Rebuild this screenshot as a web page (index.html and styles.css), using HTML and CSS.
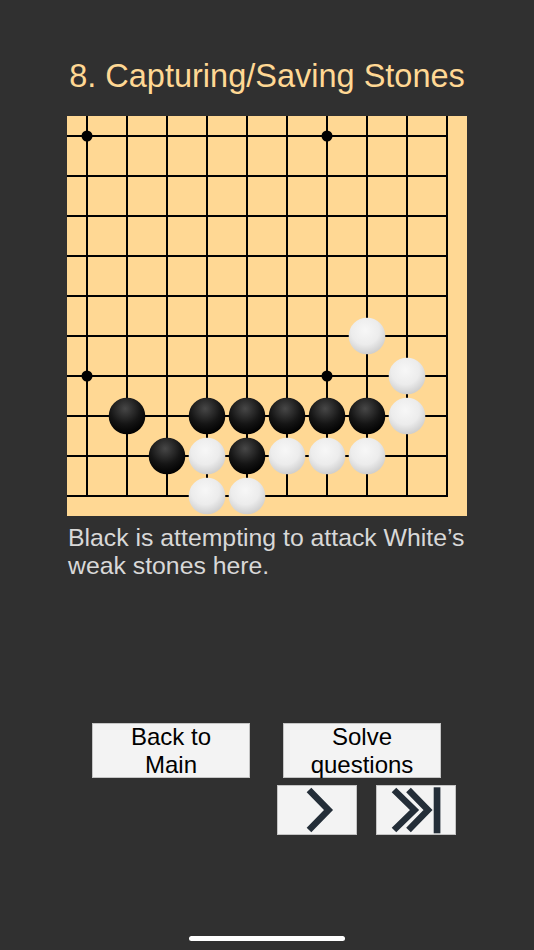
FILE: index.html
```html
<!DOCTYPE html>
<html lang="en">
<head>
<meta charset="utf-8">
<title>Capturing/Saving Stones</title>
<link rel="stylesheet" href="styles.css">
</head>
<body>
<main class="screen">
  <h1 class="title">8. Capturing/Saving Stones</h1>
  <div class="board">
    <svg width="400" height="400" viewBox="0 0 400 400" xmlns="http://www.w3.org/2000/svg">
      <defs>
        <radialGradient id="gw" cx="0.45" cy="0.35" r="0.7">
          <stop offset="0" stop-color="#f7f7f7"/>
          <stop offset="0.55" stop-color="#ececec"/>
          <stop offset="1" stop-color="#c9c9c9"/>
        </radialGradient>
        <radialGradient id="gb" cx="0.45" cy="0.3" r="0.7">
          <stop offset="0" stop-color="#474747"/>
          <stop offset="0.6" stop-color="#151515"/>
          <stop offset="1" stop-color="#000"/>
        </radialGradient>
      </defs>
      <rect width="400" height="400" fill="#FFD894"/>
      <g stroke="#000" stroke-width="2">
        <line x1="20" y1="0" x2="20" y2="381"/>
        <line x1="60" y1="0" x2="60" y2="381"/>
        <line x1="100" y1="0" x2="100" y2="381"/>
        <line x1="140" y1="0" x2="140" y2="381"/>
        <line x1="180" y1="0" x2="180" y2="381"/>
        <line x1="220" y1="0" x2="220" y2="381"/>
        <line x1="260" y1="0" x2="260" y2="381"/>
        <line x1="300" y1="0" x2="300" y2="381"/>
        <line x1="340" y1="0" x2="340" y2="381"/>
        <line x1="380" y1="0" x2="380" y2="381"/>
        <line x1="0" y1="20" x2="381" y2="20"/>
        <line x1="0" y1="60" x2="381" y2="60"/>
        <line x1="0" y1="100" x2="381" y2="100"/>
        <line x1="0" y1="140" x2="381" y2="140"/>
        <line x1="0" y1="180" x2="381" y2="180"/>
        <line x1="0" y1="220" x2="381" y2="220"/>
        <line x1="0" y1="260" x2="381" y2="260"/>
        <line x1="0" y1="300" x2="381" y2="300"/>
        <line x1="0" y1="340" x2="381" y2="340"/>
        <line x1="0" y1="380" x2="381" y2="380"/>
      </g>
      <g fill="#000">
        <circle cx="20" cy="20" r="5.5"/>
        <circle cx="260" cy="20" r="5.5"/>
        <circle cx="20" cy="260" r="5.5"/>
        <circle cx="260" cy="260" r="5.5"/>
      </g>
      <g fill="url(#gb)">
        <circle cx="60" cy="300" r="18.3"/>
        <circle cx="140" cy="300" r="18.3"/>
        <circle cx="180" cy="300" r="18.3"/>
        <circle cx="220" cy="300" r="18.3"/>
        <circle cx="260" cy="300" r="18.3"/>
        <circle cx="300" cy="300" r="18.3"/>
        <circle cx="100" cy="340" r="18.3"/>
        <circle cx="180" cy="340" r="18.3"/>
      </g>
      <g fill="url(#gw)">
        <circle cx="300" cy="220" r="18.3"/>
        <circle cx="340" cy="260" r="18.3"/>
        <circle cx="340" cy="300" r="18.3"/>
        <circle cx="140" cy="340" r="18.3"/>
        <circle cx="220" cy="340" r="18.3"/>
        <circle cx="260" cy="340" r="18.3"/>
        <circle cx="300" cy="340" r="18.3"/>
        <circle cx="140" cy="380" r="18.3"/>
        <circle cx="180" cy="380" r="18.3"/>
      </g>
    </svg>
  </div>
  <p class="desc">Black is attempting to attack White’s weak stones here.</p>
  <div class="controls">
    <div class="row row-main">
      <div class="btn btn-text">Back to<br>Main</div>
      <div class="btn btn-text">Solve<br>questions</div>
    </div>
    <div class="row row-nav">
      <div class="btn btn-icon">
        <svg width="80" height="50" viewBox="0 0 80 50" xmlns="http://www.w3.org/2000/svg">
          <polyline points="32,5 51.5,25 32,45" fill="none" stroke="#242e38" stroke-width="6.5" stroke-linejoin="miter"/>
        </svg>
      </div>
      <div class="btn btn-icon">
        <svg width="80" height="50" viewBox="0 0 80 50" xmlns="http://www.w3.org/2000/svg">
          <polyline points="18,5 38.5,25 18,45" fill="none" stroke="#242e38" stroke-width="6.5" stroke-linejoin="miter"/>
          <polyline points="32.5,5 52,25 32.5,45" fill="none" stroke="#242e38" stroke-width="6.5" stroke-linejoin="miter"/>
          <rect x="57.7" y="2.3" width="6.7" height="46" fill="#242e38"/>
        </svg>
      </div>
    </div>
  </div>
  <div class="home-indicator"></div>
</main>
</body>
</html>
```
FILE: styles.css
```css
* {
  box-sizing: border-box;
}

body {
  margin: 0;
  background: #303030;
}

.screen {
  position: relative;
  width: 534px;
  height: 950px;
  overflow: hidden;
  font-family: "Liberation Sans", Arial, sans-serif;
}

.title {
  margin: 0;
  padding-top: 58px;
  font-size: 32.5px;
  line-height: 36px;
  font-weight: normal;
  color: #FFD894;
  text-align: center;
}

.board {
  width: 400px;
  height: 400px;
  margin: 22px auto 0;
}

.board svg {
  display: block;
}

.desc {
  width: 400px;
  margin: 8px auto 0;
  padding-left: 1px;
  font-size: 24.8px;
  line-height: 28px;
  color: #d8d8d8;
}

.controls {
  margin-top: 143px;
}

.row {
  display: flex;
}

.row-main {
  gap: 33px;
  padding-left: 92px;
}

.row-nav {
  gap: 19px;
  padding-left: 277px;
  margin-top: 7px;
}

.btn {
  background: #f3f3f3;
  box-shadow: inset 0 0 0 1px #c4c4c4;
  color: #000;
}

.btn-text {
  width: 158px;
  height: 55px;
  font-size: 24px;
  line-height: 28px;
  text-align: center;
}

.btn-icon {
  width: 80px;
  height: 50px;
}

.btn-icon svg {
  display: block;
}

.home-indicator {
  position: absolute;
  left: 189px;
  top: 936px;
  width: 156px;
  height: 5px;
  border-radius: 3px;
  background: #fff;
}
```
